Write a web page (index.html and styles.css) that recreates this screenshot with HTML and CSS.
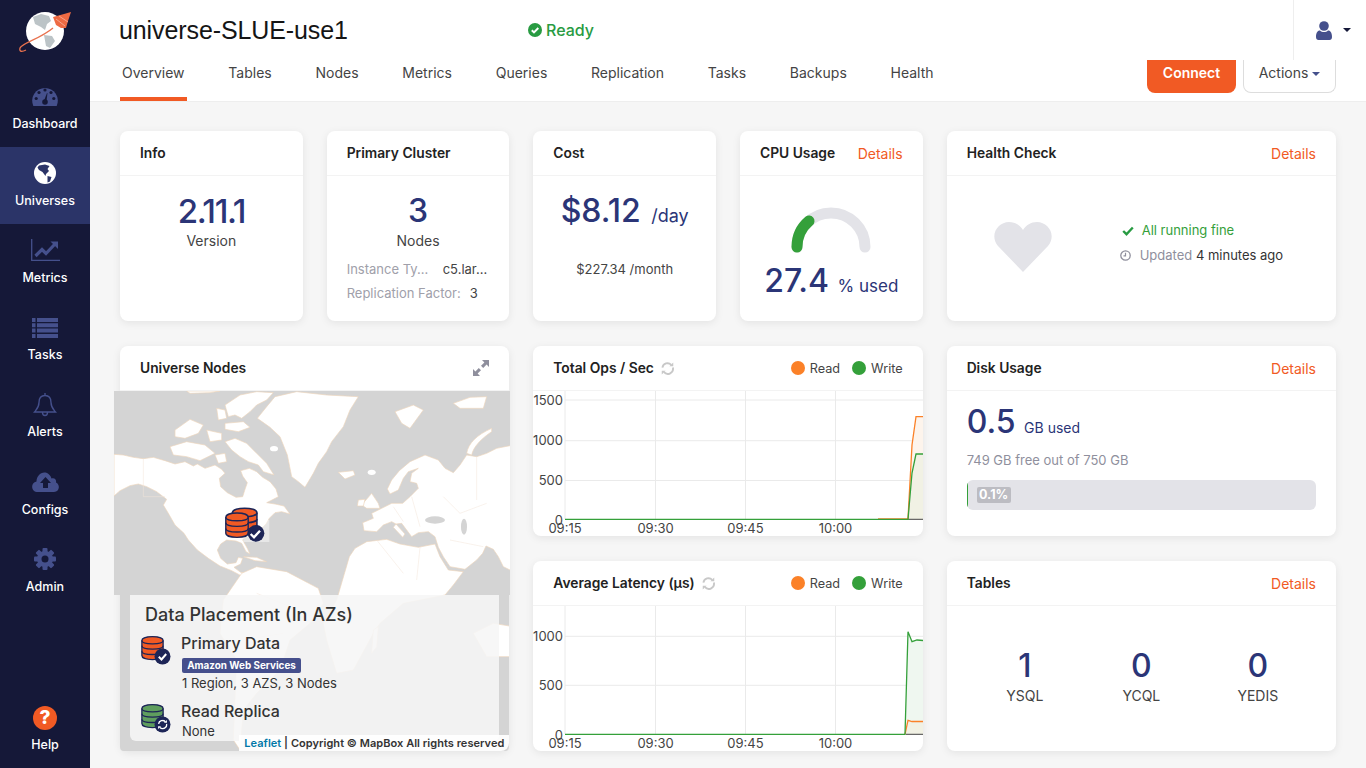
FILE: index.html
```html
<!DOCTYPE html>
<html lang="en">
  <head>
    <meta charset="UTF-8" />
    <meta name="viewport" content="width=device-width, initial-scale=1.0" />
    <title>universe-SLUE-use1</title>
    <link rel="stylesheet" href="styles.css">
  </head>
  <body>
    <!-- Shared icons -->
    <svg class="defs" width="0" height="0">
      <symbol id="db" viewBox="0 0 26 30">
        <path d="M1 6C1 0 25 0 25 6V23C25 29 1 29 1 23Z" fill="currentColor" stroke="#1d2557" stroke-width="1.5" />
        <path d="M1 6C1 11 25 11 25 6M1 12C1 17 25 17 25 12M1 18C1 23 25 23 25 18" fill="none" stroke="#1d2557" stroke-width="1.5" />
      </symbol>
      <symbol id="refresh" viewBox="0 0 14 14">
        <path d="M1.5 6A5.6 5.6 0 0 1 11 3" fill="none" stroke="currentColor" stroke-width="2" />
        <path d="M12.8 6A5.6 5.6 0 0 1 3.2 11" fill="none" stroke="currentColor" stroke-width="2" />
        <path d="M9 4.6h4.2V.6zM5 9.4H.8v4z" fill="currentColor" />
      </symbol>
    </svg>

    <div class="app">
      <!-- Sidebar -->
      <nav class="sidebar">
        <div class="logo">
          <svg width="60" height="50" viewBox="0 0 60 50">
            <circle cx="31" cy="24" r="19" fill="#fff" />
            <path d="M19 10L27 7 35 9 37 14 33 17 31 23 27 20 21 17zM30 28L38 29 41 34 36 41 32 39z" fill="#bcc4c7" />
            <path d="M39 10L50 7 57 5 54 14 52 21 47 21 42 18z" fill="#ee6a43" />
            <path d="M42 12L51 19M45 9L54 15" fill="none" stroke="#f8a58c" />
            <path d="M39 21C26 32 8 36 6 41C5 45 8 45 12 43" fill="none" stroke="#e8714e" stroke-width="1.3" />
          </svg>
        </div>

        <a class="nav-item" href="#">
          <svg class="nav-icon" width="26" height="21" viewBox="0 0 26 21">
            <path d="M1.3 20.5A12.8 12.8 0 1 1 24.7 20.5Z" fill="#45508c" />
            <g fill="#151838">
              <circle cx="13" cy="4.5" r="1.6" />
              <circle cx="7" cy="7" r="1.6" />
              <circle cx="19" cy="7" r="1.6" />
              <circle cx="4.2" cy="13" r="1.6" />
              <circle cx="21.8" cy="13" r="1.6" />
              <circle cx="13" cy="16.5" r="2.8" />
              <path d="M11.7 16L15 7.5 15.5 7.8 14.3 17Z" />
            </g>
          </svg>
          <span>Dashboard</span>
        </a>
        <a class="nav-item active" href="#">
          <svg class="nav-icon" width="22" height="22" viewBox="0 0 22 22">
            <circle cx="11" cy="11" r="11" fill="#fff" />
            <path d="M5 3.5L11 2.5 15.5 4 13.5 7 15 9 12 12 11.5 14 8.5 10 5 8 3.5 5.5zM13.5 14L17.5 15 16 19.5 13.5 20.5z" fill="#2b3468" />
          </svg>
          <span>Universes</span>
        </a>
        <a class="nav-item" href="#">
          <svg class="nav-icon" width="29" height="22" viewBox="0 0 29 22">
            <path d="M.7 0V21.3H29" fill="none" stroke="#45508c" stroke-width="1.3" />
            <path d="M4.5 17L11 10.5 15 14.5 24 5" fill="none" stroke="#45508c" stroke-width="3.2" />
            <path d="M19.5 2.5H27V10Z" fill="#45508c" />
          </svg>
          <span>Metrics</span>
        </a>
        <a class="nav-item" href="#">
          <svg class="nav-icon" width="26" height="20" viewBox="0 0 26 20" fill="#45508c">
            <path d="M0 0h3.5v4H0zM5 0h21v4H5zM0 5.3h3.5v4H0zM5 5.3h21v4H5zM0 10.6h3.5v4H0zM5 10.6h21v4H5zM0 16h3.5v4H0zM5 16h21v4H5z" />
          </svg>
          <span>Tasks</span>
        </a>
        <a class="nav-item" href="#">
          <svg class="nav-icon" width="24" height="25" viewBox="0 0 24 25">
            <path d="M12 3C7 3 6 7 6 10C6 15 3.5 17 1.5 19.5H22.5C20.5 17 18 15 18 10C18 7 17 3 12 3ZM12 3V.5M9.5 20C9.5 24 14.5 24 14.5 20" fill="none" stroke="#45508c" stroke-width="1.4" />
          </svg>
          <span>Alerts</span>
        </a>
        <a class="nav-item" href="#">
          <svg class="nav-icon" width="27" height="20" viewBox="0 0 27 20">
            <path d="M6 20C-1 20-2 11 4.5 9.5C4.5 3 11-2 16.5 2C18.5 3.5 19 5 19.5 6.5C23 5.5 24.5 8 24 10.5C28.5 12.5 27.5 20 22 20Z" fill="#45508c" />
            <path d="M13.5 5L19 11H16V16H11V11H8Z" fill="#151838" />
          </svg>
          <span>Configs</span>
        </a>
        <a class="nav-item" href="#">
          <svg class="nav-icon" width="22" height="22" viewBox="0 0 22 22">
            <g fill="#45508c">
              <rect x="8.5" width="5" height="22" rx="1" />
              <rect x="8.5" width="5" height="22" rx="1" transform="rotate(45 11 11)" />
              <rect x="8.5" width="5" height="22" rx="1" transform="rotate(90 11 11)" />
              <rect x="8.5" width="5" height="22" rx="1" transform="rotate(135 11 11)" />
              <circle cx="11" cy="11" r="8" />
            </g>
            <circle cx="11" cy="11" r="3.5" fill="#151838" />
          </svg>
          <span>Admin</span>
        </a>
        <a class="nav-item help" href="#">
          <span class="help-icon">?</span>
          <span>Help</span>
        </a>
      </nav>

      <div class="content">
        <!-- Header Section -->
        <header>
          <div class="header-top">
            <h1>universe-SLUE-use1</h1>
            <div class="status">
              <svg width="14" height="14" viewBox="0 0 14 14">
                <circle cx="7" cy="7" r="7" fill="#289b42" />
                <path d="M3.8 7.2L6 9.4 10.3 5" fill="none" stroke="#fff" stroke-width="2" />
              </svg>
              Ready
            </div>
            <div class="user-menu">
              <svg width="16" height="19" viewBox="0 0 16 19" fill="#45508c">
                <circle cx="8" cy="5" r="4.8" />
                <path d="M0 16C0 11 2 9.5 4 9.5C6 11.5 10 11.5 12 9.5C14 9.5 16 11 16 16C16 18 15 19 13.5 19H2.5C1 19 0 18 0 16Z" />
              </svg>
              <span class="caret dark"></span>
            </div>
          </div>
          <div class="header-tabs">
            <a class="tab selected" href="#">Overview</a>
            <a class="tab" href="#">Tables</a>
            <a class="tab" href="#">Nodes</a>
            <a class="tab" href="#">Metrics</a>
            <a class="tab" href="#">Queries</a>
            <a class="tab" href="#">Replication</a>
            <a class="tab" href="#">Tasks</a>
            <a class="tab" href="#">Backups</a>
            <a class="tab" href="#">Health</a>
            <div class="actions">
              <button class="btn-connect">Connect</button>
              <button class="btn-actions">Actions <span class="caret"></span></button>
            </div>
          </div>
        </header>

        <!-- Overview grid -->
        <main class="grid">
          <section class="card">
            <div class="card-head"><h2>Info</h2></div>
            <div class="card-body center">
              <div class="big tight">2.11.1</div>
              <div class="sub">Version</div>
            </div>
          </section>

          <section class="card">
            <div class="card-head"><h2>Primary Cluster</h2></div>
            <div class="card-body center">
              <div class="big">3</div>
              <div class="sub">Nodes</div>
              <div class="spec">
                <div class="spec-row"><span class="spec-label short">Instance Ty...</span><span>c5.lar...</span></div>
                <div class="spec-row"><span class="spec-label">Replication Factor:</span><span>3</span></div>
              </div>
            </div>
          </section>

          <section class="card">
            <div class="card-head"><h2>Cost</h2></div>
            <div class="card-body center">
              <div class="big">$8.12 <span class="unit">/day</span></div>
              <div class="month">$227.34 /month</div>
            </div>
          </section>

          <section class="card">
            <div class="card-head"><h2>CPU Usage</h2><a class="details" href="#">Details</a></div>
            <div class="card-body center cpu">
              <svg class="gauge" width="80" height="46" viewBox="0 0 80 46">
                <path d="M6 40A34 34 0 0 1 74 40" fill="none" stroke="#e3e3e8" stroke-width="11" stroke-linecap="round" />
                <path d="M6 40A34 34 0 0 1 18 14" fill="none" stroke="#34a03a" stroke-width="11" stroke-linecap="round" />
              </svg>
              <div class="big cpu-value">27.4 <span class="unit">% used</span></div>
            </div>
          </section>

          <section class="card wide">
            <div class="card-head"><h2>Health Check</h2><a class="details" href="#">Details</a></div>
            <div class="card-body health">
              <svg class="heart" width="58" height="50" viewBox="0 0 58 50">
                <path d="M29 50L4 24C-5 13 4 0 15 0C21 0 26 3 29 8C32 3 37 0 43 0C54 0 63 13 54 24Z" fill="#e3e3e8" />
              </svg>
              <div class="health-info">
                <div class="health-row ok">
                  <svg width="12" height="10" viewBox="0 0 12 10"><path d="M1.2 5L4.5 8.2 10.8 1.5" fill="none" stroke="#289b42" stroke-width="2.4" /></svg>
                  <span>All running fine</span>
                </div>
                <div class="health-row">
                  <svg width="11" height="11" viewBox="0 0 11 11"><circle cx="5.5" cy="5.5" r="4.7" fill="none" stroke="#8f8f9d" stroke-width="1.3" /><path d="M5.5 2.8V5.8H3.5" fill="none" stroke="#8f8f9d" stroke-width="1.2" /></svg>
                  <span><span class="muted">Updated</span> 4 minutes ago</span>
                </div>
              </div>
            </div>
          </section>

          <section class="card map-card">
            <div class="card-head">
              <h2>Universe Nodes</h2>
              <svg width="16" height="16" viewBox="0 0 16 16" fill="#8f8f9d">
                <path d="M9 0H16V7L13.6 4.6 10.2 8 8 5.8 11.4 2.4Z" />
                <path d="M7 16H0V9L2.4 11.4 5.8 8 8 10.2 4.6 13.6Z" />
              </svg>
            </div>
            <div class="map-wrap">
              <svg class="world" width="396" height="360" viewBox="12 153 1188 1080">
                <defs>
                  <clipPath id="map-shape">
                    <path d="M12 153H1200V765H1197V1221A12 12 0 0 1 1185 1233H42A12 12 0 0 1 30 1221V765H12Z" />
                  </clipPath>
                </defs>
                <g clip-path="url(#map-shape)">
                  <rect x="12" y="153" width="1188" height="1080" fill="#d4d4d4" />
                  <g fill="#fff" stroke="#efd6bd" stroke-width="2" stroke-linejoin="round">
                    <!-- North America -->
                    <path d="M12 343L40 345 70 352 100 356 130 352 165 362 195 372 225 365 250 378 262 372 285 385 315 375 335 388 345 400 328 415 332 440 352 458 378 472 398 470 405 448 412 428 398 408 392 392 418 385 440 395 458 412 480 425 498 447 505 470 490 478 470 488 495 492 522 498 540 522 515 515 495 518 478 535 468 552 452 568 432 585 405 592 398 600 412 625 420 642 408 635 395 610 378 603 350 600 332 612 322 630 332 655 352 672 378 668 385 652 398 655 392 672 372 682 392 697 420 702 395 708 365 692 330 678 295 655 262 630 235 600 222 580 195 555 175 520 160 495 170 478 140 455 110 440 85 432 60 437 30 452 12 468Z" />
                    <path d="M400 650L440 652 470 665 435 662Z" />
                    <!-- Arctic islands -->
                    <path d="M345 195L390 165 440 155 490 158 470 180 440 195 420 215 395 235 375 225 355 230Z" />
                    <path d="M320 205L345 210 350 235 325 240Z" />
                    <path d="M345 250L400 245 420 262 385 275 345 268Z" />
                    <path d="M345 305L375 295 410 310 440 340 470 370 492 405 460 395 445 375 415 365 390 350 365 330Z" />
                    <path d="M195 270L240 238 280 255 265 280 225 295 195 290Z" />
                    <path d="M180 320L230 305 285 315 315 340 270 362 230 350 190 345Z" />
                    <path d="M290 270L335 280 335 300 300 305Z" />
                    <path d="M315 345L345 340 350 365 325 370Z" />
                    <path d="M230 153H330L300 158 240 160Z" />
                    <!-- Greenland and the north atlantic -->
                    <path d="M442 235L470 200 495 170 560 155 650 165 745 170 720 210 700 260 665 305 650 335 625 370 610 400 585 442 565 425 545 410 532 345 510 290 480 262Z" />
                    <path d="M685 397L730 392 735 405 705 417Z" />
                    <ellipse cx="492" cy="326" rx="12" ry="8" stroke="none" />
                    <ellipse cx="785" cy="397" rx="12" ry="8" stroke="none" />
                    <path d="M855 215L910 195 940 210 900 265 875 250Z" />
                    <path d="M1030 190L1080 172 1130 170 1120 205 1050 205Z" />
                    <path d="M1145 265C1100 285 1075 310 1070 340L1085 345C1090 320 1115 295 1145 275Z" />
                    <!-- Eurasia -->
                    <path d="M832 447L845 420 868 392 900 365 945 345 985 360 1005 385 1030 398 1050 375 1070 345 1100 350 1130 340 1160 325 1210 315V695L1180 680 1165 650 1150 628 1128 618 1118 640 1100 660 1065 688 1020 680 1000 650 985 622 975 590 955 575 925 578 905 590 890 570 875 550 858 552 845 545 820 555 800 575 762 572 758 548 790 535 785 520 815 505 845 490 878 490 900 470 925 445 920 430 900 425 905 400 925 385 895 395 880 415 865 450 840 462Z" />
                    <path d="M858 552L885 582 878 592 850 562Z" />
                    <path d="M755 495L785 460 805 490 810 505 770 505Z" />
                    <path d="M745 480L765 478 760 498 742 498Z" />
                    <!-- South America, Africa, Oceania -->
                    <path d="M395 700L440 680 530 695 625 745 640 790 600 850 540 900 510 990 440 1060 400 1110 390 1230 370 1200 375 1080 380 960 330 880 340 780Z" />
                    <path d="M718 650L735 625 770 605 830 598 870 612 925 622 975 612 990 650 1015 690 1060 695 1030 735 1005 765 880 790 810 850 790 880 730 990 680 1000 650 900 640 850 680 780Z" />
                    <path d="M790 870L805 860 800 920 785 940Z" />
                    <path d="M1090 880L1150 850 1210 860V950L1130 950Z" />
                  </g>
                  <!-- Seas inside the land -->
                  <g fill="#d4d4d4">
                    <ellipse cx="975" cy="540" rx="30" ry="11" />
                    <ellipse cx="1062" cy="560" rx="9" ry="24" />
                  </g>
                  <!-- Borders -->
                  <path d="M100 356V470H165M850 500L880 545M905 470L930 560M1000 470L1050 520L1130 490M1100 350V480M800 600L880 700M930 622L920 720M1020 600L1120 620M440 760L540 800M400 900L520 880" fill="none" stroke="#f2e5d8" stroke-width="1.5" />
                  <!-- Node marker -->
                  <rect x="400" y="540" width="78" height="66" fill="#fff" opacity=".45" />
                  <use href="#db" x="362" y="500" width="84" height="92" color="#f15a24" />
                  <use href="#db" x="336" y="515" width="90" height="84" color="#f15a24" />
                  <circle cx="438" cy="580" r="25" fill="#1d2557" />
                  <path d="M422 582L432 592 450 572" fill="none" stroke="#fff" stroke-width="7" />
                </g>
              </svg>

              <div class="placement">
                <h3>Data Placement (In AZs)</h3>
                <div class="placement-row">
                  <svg class="db-icon" width="30" height="30" viewBox="0 0 30 30">
                    <use href="#db" width="23" height="27" color="#f15a24" />
                    <circle cx="21.5" cy="21.5" r="8" fill="#1d2557" />
                    <path d="M17.8 21.8L20.5 24.5 25.2 19" fill="none" stroke="#fff" stroke-width="2" />
                  </svg>
                  <div>
                    <h4>Primary Data</h4>
                    <span class="badge">Amazon Web Services</span>
                    <p>1 Region, 3 AZS, 3 Nodes</p>
                  </div>
                </div>
                <div class="placement-row second">
                  <svg class="db-icon" width="30" height="30" viewBox="0 0 30 30">
                    <use href="#db" width="23" height="27" color="#5f9e5e" />
                    <circle cx="21.5" cy="21.5" r="8" fill="#1d2557" />
                    <use href="#refresh" x="16.5" y="16.5" width="10" height="10" color="#fff" />
                  </svg>
                  <div>
                    <h4>Read Replica</h4>
                    <p>None</p>
                  </div>
                </div>
              </div>
              <div class="attribution"><a href="#">Leaflet</a> | Copyright © MapBox All rights reserved</div>
            </div>
          </section>

          <section class="card double">
            <div class="card-head">
              <h2>Total Ops / Sec</h2>
              <svg class="refresh" width="13" height="13"><use href="#refresh" width="13" height="13" /></svg>
              <div class="legend">
                <span class="dot read"></span>Read
                <span class="dot write"></span>Write
              </div>
            </div>
            <svg class="chart" width="390" height="145" viewBox="0 0 390 145">
              <path d="M32 9H390M32 49.7H390M32 89.5H390M122.5 0V128M212.5 0V128M302.5 0V128" fill="none" stroke="#eaeaea" />
              <path d="M32 0V128" fill="none" stroke="#eaeaea" />
              <path d="M375 128.3L379 54 383 25.7H390V128.3Z" fill="#fdf4ec" />
              <path d="M375 128.3L379 82 383 63H390V128.3Z" fill="#f1f1e4" />
              <path d="M375 128.3H390" stroke="#444" fill="none" />
              <path d="M345 127.8H375L379 54 383 25.7H390" fill="none" stroke="#fb8128" stroke-width="1.3" />
              <path d="M32 128.3H375L379 82 383 63H390" fill="none" stroke="#34a03a" stroke-width="1.3" />
              <g class="tick y">
                <text x="30" y="14">1500</text>
                <text x="30" y="54">1000</text>
                <text x="30" y="94">500</text>
                <text x="30" y="134">0</text>
              </g>
              <g class="tick x">
                <text x="32" y="142">09:15</text>
                <text x="122.5" y="142">09:30</text>
                <text x="212.5" y="142">09:45</text>
                <text x="302.5" y="142">10:00</text>
              </g>
            </svg>
          </section>

          <section class="card wide">
            <div class="card-head"><h2>Disk Usage</h2><a class="details" href="#">Details</a></div>
            <div class="card-body disk">
              <div class="big">0.5 <span class="unit small">GB used</span></div>
              <div class="disk-free">749 GB free out of 750 GB</div>
              <div class="progress">
                <div class="progress-fill" style="width: 0.1%"></div>
                <span class="progress-label">0.1%</span>
              </div>
            </div>
          </section>

          <section class="card double">
            <div class="card-head">
              <h2>Average Latency (µs)</h2>
              <svg class="refresh" width="13" height="13"><use href="#refresh" width="13" height="13" /></svg>
              <div class="legend">
                <span class="dot read"></span>Read
                <span class="dot write"></span>Write
              </div>
            </div>
            <svg class="chart" width="390" height="145" viewBox="0 0 390 145">
              <path d="M32 30.3H390M32 79.3H390M122.5 0V128M212.5 0V128M302.5 0V128" fill="none" stroke="#eaeaea" />
              <path d="M32 0V128" fill="none" stroke="#eaeaea" />
              <path d="M372 128.3L375 25.7 379 35.7 384 34 390 34.5V128.3Z" fill="#eff7f0" />
              <path d="M372 128.3L375 114.3 379 115.5H390V128.3Z" fill="#f1f1e4" />
              <path d="M372 128.3L375 114.3 379 115.5H390" fill="none" stroke="#fb8128" stroke-width="1.3" />
              <path d="M32 128.3H372L375 25.7 379 35.7 384 34 390 34.5" fill="none" stroke="#34a03a" stroke-width="1.3" />
              <path d="M373 128.3H390" stroke="#444" fill="none" />
              <g class="tick y">
                <text x="30" y="35">1000</text>
                <text x="30" y="84">500</text>
                <text x="30" y="134">0</text>
              </g>
              <g class="tick x">
                <text x="32" y="142">09:15</text>
                <text x="122.5" y="142">09:30</text>
                <text x="212.5" y="142">09:45</text>
                <text x="302.5" y="142">10:00</text>
              </g>
            </svg>
          </section>

          <section class="card wide">
            <div class="card-head"><h2>Tables</h2><a class="details" href="#">Details</a></div>
            <div class="card-body table-counts">
              <div><div class="big">1</div><div class="sub">YSQL</div></div>
              <div><div class="big">0</div><div class="sub">YCQL</div></div>
              <div><div class="big">0</div><div class="sub">YEDIS</div></div>
            </div>
          </section>
        </main>
      </div>
    </div>
  </body>
</html>
```

FILE: styles.css
```css
* {
  box-sizing: border-box;
}

body {
  margin: 0;
  height: 768px;
  overflow: hidden;
  font-family: Inter, "Liberation Sans", sans-serif;
  background-color: #f6f6f6;
  color: #333;
}

a {
  text-decoration: none;
}

.defs {
  display: block;
  height: 0;
}

.app {
  display: flex;
  height: 768px;
}

/* Sidebar */
.sidebar {
  width: 90px;
  flex: none;
  display: flex;
  flex-direction: column;
  background-color: #151838;
}

.logo {
  height: 70px;
  padding: 7px 0 0 14px;
}

.nav-item {
  height: 77.2px;
  flex: none;
  display: flex;
  flex-direction: column;
  align-items: center;
  color: #fff;
  font-size: 12.5px;
  font-weight: 500;
  line-height: 16px;
}

.nav-item.active {
  background-color: #2b3468;
}

.nav-icon {
  height: 26px;
  margin-top: 13px;
  margin-bottom: 6.6px;
}

.nav-item.help {
  margin-top: auto;
  height: 62px;
}

.help-icon {
  width: 24px;
  height: 24px;
  margin-bottom: 7px;
  border-radius: 50%;
  background-color: #f15a24;
  color: #fff;
  font-size: 19px;
  font-weight: 800;
  line-height: 24px;
  text-align: center;
}

/* Header */
.content {
  flex: 1;
  min-width: 0;
}

header {
  height: 102px;
  background-color: #fff;
  border-bottom: 1px solid #eee;
}

.header-top {
  height: 60px;
  display: flex;
  align-items: center;
  padding-left: 29px;
}

h1 {
  width: 409px;
  margin: 0;
  font-family: "Liberation Sans", Arial, sans-serif;
  font-size: 25px;
  font-weight: 400;
  letter-spacing: -0.1px;
  color: #151515;
}

.status {
  display: flex;
  align-items: center;
  gap: 4px;
  color: #289b42;
  font-size: 16px;
  font-weight: 500;
}

.user-menu {
  margin-left: auto;
  height: 60px;
  width: 73px;
  display: flex;
  align-items: center;
  gap: 11px;
  padding-left: 22px;
  border-left: 1px solid #eee;
}

.caret {
  display: inline-block;
  vertical-align: middle;
  border-top: 4px solid #45508c;
  border-left: 4px solid transparent;
  border-right: 4px solid transparent;
}

.caret.dark {
  border-top-color: #151838;
}

.header-tabs {
  height: 41px;
  display: flex;
  padding-left: 30px;
}

.tab {
  height: 41px;
  margin-right: 39.75px;
  padding: 5px 2px 0;
  color: #444;
  font-size: 14px;
  line-height: 16px;
  border-bottom: 4px solid transparent;
}

.tab.selected {
  border-bottom-color: #f15a24;
}

.actions {
  margin-left: auto;
  margin-right: 30px;
  display: flex;
  gap: 7px;
  height: 33px;
}

.actions button {
  height: 33px;
  padding: 0 0 8px;
  border-radius: 0 0 8px 8px;
  font-family: inherit;
  font-size: 14px;
}

.btn-connect {
  width: 89px;
  border: none;
  background-color: #f15a24;
  color: #fff;
  font-weight: 600;
}

.btn-actions {
  width: 93px;
  border: 1px solid #ddd;
  border-top: none;
  background-color: #fff;
  color: #444;
}

/* Grid of cards */
.grid {
  display: grid;
  grid-template-columns: repeat(6, 1fr);
  grid-auto-rows: 190px;
  column-gap: 24px;
  row-gap: 25px;
  padding: 29px 30px 0;
}

.card {
  display: flex;
  flex-direction: column;
  background-color: #fff;
  border-radius: 8px;
  box-shadow: 0 2px 8px rgba(0, 0, 0, 0.08);
}

.card.wide,
.card.double {
  grid-column: span 2;
}

.card.map-card {
  grid-column: 1 / span 2;
  grid-row: 2 / span 2;
}

.card.double:nth-of-type(7) {
  grid-column: 3 / span 2;
}

.card-head {
  height: 45px;
  flex: none;
  display: flex;
  align-items: center;
  padding: 0 20px;
  border-bottom: 1px solid #f3f3f3;
}

.card-head h2 {
  margin: -1px 0 0;
  font-size: 13.8px;
  font-weight: 600;
  color: #222;
}

.card-head svg {
  margin-left: auto;
}

.card-head svg.refresh {
  margin-left: 7px;
  color: #c8c8c8;
}

.details {
  margin-left: auto;
  color: #f15a24;
  font-size: 14px;
}

.card-body {
  flex: 1;
}

.center {
  text-align: center;
}

.big {
  color: #2b3577;
  font-size: 32px;
  font-weight: 500;
  line-height: 38px;
  margin-top: 16px;
}

.big.tight {
  font-size: 33px;
  letter-spacing: -1.4px;
}

.unit {
  margin-left: 2px;
  font-size: 18px;
  font-weight: 400;
}

.unit.small {
  margin-left: 0;
  font-size: 14px;
}

.sub {
  margin-top: 2px;
  font-size: 14px;
  line-height: 18px;
  color: #444;
}

.spec {
  margin-top: 7px;
  padding: 0 20px;
  text-align: left;
  font-size: 13px;
  line-height: 24px;
  color: #444;
}

.spec-row {
  display: flex;
  gap: 9px;
}

.spec-label {
  color: #a0a0aa;
}

.spec-label.short {
  width: 87px;
  white-space: nowrap;
}

.month {
  margin-top: 25px;
  font-size: 13px;
  line-height: 18px;
  color: #444;
}

/* CPU gauge */
.gauge {
  display: block;
  margin: 31px auto 0;
}

.big.cpu-value {
  margin-top: 9px;
  white-space: nowrap;
}

.cpu-value .unit {
  margin-left: 0;
  font-size: 17px;
}

/* Health */
.health {
  display: flex;
  align-items: center;
  padding-bottom: 11px;
}

.heart {
  margin-left: 47px;
  margin-bottom: -8px;
}

.health-info {
  margin-left: 68px;
  font-size: 13px;
  line-height: 25px;
  color: #333;
}

.health-row {
  display: flex;
  align-items: center;
  gap: 9px;
}

.health-row.ok {
  color: #34a03a;
}

.health-row.ok svg {
  margin-left: 2px;
  margin-right: -1px;
}

.health-row .muted {
  color: #8f8f9d;
}

/* Map */
.map-wrap {
  position: relative;
  flex: 1;
}

.world {
  position: absolute;
  top: 0;
  left: -6px;
  display: block;
}

.placement {
  position: absolute;
  top: 204px;
  left: 10px;
  width: 369px;
  height: 146px;
  padding: 9px 15px 0 11px;
  background-color: rgba(246, 246, 246, 0.88);
  border-radius: 0 0 6px 6px;
  overflow: hidden;
}

.placement h3 {
  margin: 0 0 0 4px;
  font-size: 18px;
  font-weight: 500;
  line-height: 22px;
  color: #333;
}

.placement-row {
  display: flex;
  gap: 10px;
  margin-top: 7px;
}

.placement-row.second {
  margin-top: 8px;
}

.db-icon {
  flex: none;
  margin-top: 2px;
}

.placement h4 {
  margin: 0;
  font-size: 16px;
  font-weight: 500;
  line-height: 20px;
  color: #333;
}

.placement p {
  margin: 0 0 0 1px;
  font-size: 13px;
  line-height: 20px;
  color: #333;
}

.badge {
  display: block;
  width: 119px;
  height: 15px;
  margin-top: 5px;
  margin-left: 1px;
  background-color: #454f8c;
  border-radius: 2px;
  color: #fff;
  font-size: 9.9px;
  font-weight: 700;
  line-height: 15px;
  text-align: center;
}

.attribution {
  position: absolute;
  right: 0;
  bottom: 0;
  width: 270px;
  height: 16px;
  padding-right: 5px;
  background-color: rgba(255, 255, 255, 0.92);
  border-bottom-right-radius: 8px;
  font-size: 11px;
  font-weight: 600;
  line-height: 17px;
  letter-spacing: 0.04px;
  text-align: right;
  white-space: nowrap;
  color: #333;
}

.attribution a {
  color: #0078a8;
}

/* Charts */
.legend {
  margin-left: auto;
  display: flex;
  align-items: center;
  font-size: 12.7px;
  color: #444;
}

.dot {
  width: 14px;
  height: 14px;
  margin-right: 5px;
  border-radius: 50%;
}

.dot.read {
  background-color: #fb8128;
}

.dot.write {
  margin-left: 12px;
  background-color: #34a03a;
}

.chart {
  display: block;
  border-radius: 0 0 8px 8px;
}

.tick text {
  font-family: Inter, sans-serif;
  font-size: 13px;
  fill: #444;
}

.tick.y text {
  text-anchor: end;
}

.tick.x text {
  text-anchor: middle;
}

/* Disk */
.disk {
  padding: 0 20px;
}

.disk .big {
  margin-top: 12px;
}

.disk-free {
  margin-top: 4px;
  font-size: 13px;
  line-height: 18px;
  color: #8f8f9d;
}

.progress {
  position: relative;
  height: 30px;
  margin-top: 11px;
  background-color: #e3e3e8;
  border-radius: 6px;
  overflow: hidden;
}

.progress-fill {
  height: 100%;
  min-width: 1px;
  background-color: #34a03a;
}

.progress-label {
  position: absolute;
  top: 7px;
  left: 10px;
  width: 34px;
  height: 16px;
  border-radius: 2px;
  background-color: #bcbcc2;
  color: #fff;
  font-size: 12.5px;
  font-weight: 700;
  line-height: 16px;
  text-align: center;
}

/* Tables */
.table-counts {
  display: grid;
  grid-template-columns: repeat(3, 1fr);
  padding: 25px 20px 0;
  text-align: center;
}

.table-counts .sub {
  color: #444;
  font-size: 14px;
}
```
